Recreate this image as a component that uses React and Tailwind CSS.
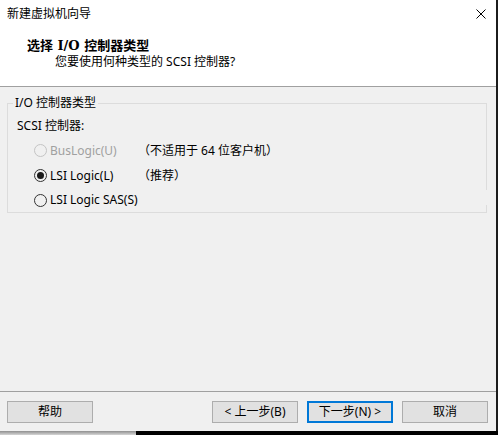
import React from "react";

function Radio({ checked, disabled }) {
  return (
    <span
      className={`w-[13px] h-[13px] rounded-full border flex items-center justify-center shrink-0 ${
        disabled ? "border-[#c4c4c4]" : "border-[#333333]"
      }`}
    >
      {checked && <span className="w-[7px] h-[7px] rounded-full bg-[#1a1a1a]" />}
    </span>
  );
}

function Btn({ children, primary }) {
  return (
    <div
      className={`w-[86px] h-[22px] bg-[#e1e1e1] flex items-center justify-center text-[12px] leading-[16px] text-black ${
        primary ? "border-2 border-[#0078d7]" : "border border-[#adadad]"
      }`}
    >
      {children}
    </div>
  );
}

export default function App() {
  return (
    <div className="w-[498px] h-[435px] flex flex-col bg-black overflow-hidden font-['Noto_Sans','Noto_Sans_CJK_SC',sans-serif] text-black">
      <div className="flex h-[431px]">
        <div className="w-[496px] h-full bg-[#f0f0f0] flex flex-col">
          {/* Header */}
          <div className="h-[87px] bg-white border-b border-[#a0a0a0] flex flex-col">
            <div className="h-[28px] flex items-center justify-between pl-[7px] pr-[10px]">
              <span className="text-[12px] leading-[16px]">新建虚拟机向导</span>
              <svg width="10" height="10" viewBox="0 0 10 10" className="block">
                <path d="M0.5 0.5 L9.5 9.5 M9.5 0.5 L0.5 9.5" stroke="#000" strokeWidth="1" fill="none" />
              </svg>
            </div>
            <div className="pl-[27px] mt-[10px] font-bold text-[13px] leading-[16px] font-['DejaVu_Serif','Noto_Sans_CJK_SC',serif]">
              选择 I/O 控制器类型
            </div>
            <div className="pl-[55px] text-[12px] leading-[16px]">
              您要使用何种类型的 SCSI 控制器?
            </div>
          </div>

          {/* Body */}
          <div className="flex-1 relative">
            <fieldset className="ml-[7px] mt-[8px] w-[480px] border border-[#dcdcdc] pl-[5px]">
              <legend className="px-[2px] text-[12px] leading-[16px]">I/O 控制器类型</legend>
              <div className="mt-[3px] h-[24px] flex items-center pl-[4px] text-[12px] leading-[16px]">
                SCSI 控制器:
              </div>
              <div className="h-[25px] flex items-center pl-[21px] text-[12px] leading-[16px]">
                <div className="w-[104px] flex items-center">
                  <Radio disabled />
                  <span className="ml-[3px] text-[#a0a0a0]">BusLogic(U)</span>
                </div>
                <span>（不适用于 64 位客户机）</span>
              </div>
              <div className="h-[25px] flex items-center pl-[21px] text-[12px] leading-[16px]">
                <div className="w-[104px] flex items-center">
                  <Radio checked />
                  <span className="ml-[3px]">LSI Logic(L)</span>
                </div>
                <span>（推荐）</span>
              </div>
              <div className="h-[24px] flex items-center pl-[21px] text-[12px] leading-[16px]">
                <div className="flex items-center">
                  <Radio />
                  <span className="ml-[3px]">LSI Logic SAS(S)</span>
                </div>
              </div>
            </fieldset>
            <span className="absolute left-[486px] top-[103px] w-[1px] h-[15px] bg-[#f0f0f0]" />
          </div>

          {/* Footer */}
          <div className="h-[40px] border-t border-[#a0a0a0] flex items-start pt-[9px] pl-[7px] pr-[8px]">
            <Btn>帮助</Btn>
            <div className="ml-auto flex gap-[9px]">
              <Btn>&lt; 上一步(B)</Btn>
              <Btn primary>下一步(N) &gt;</Btn>
              <Btn>取消</Btn>
            </div>
          </div>
        </div>
        <div className="w-[2px] h-full bg-[#1c1c1c]" />
      </div>
      <div className="flex h-[4px]">
        <div className="w-[136px] h-full bg-linear-to-b from-[#8f8f8f] to-[#d6d6d6]" />
        <div className="flex-1 h-full bg-black" />
      </div>
    </div>
  );
}
